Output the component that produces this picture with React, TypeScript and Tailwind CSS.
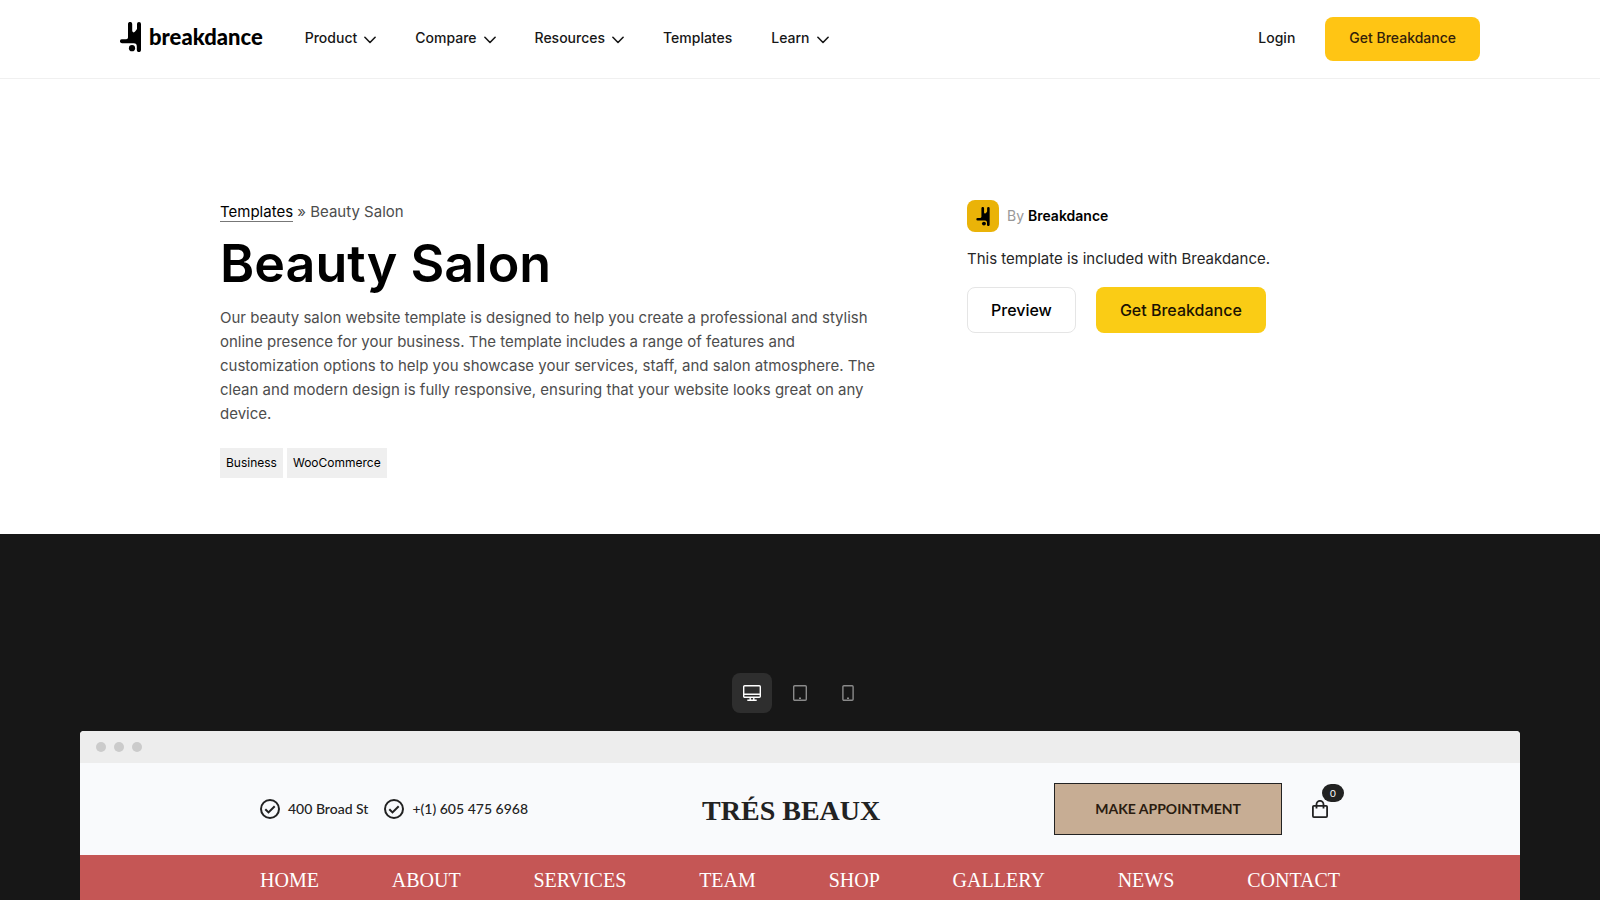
import { useState } from 'react';

const navItems = [
  { label: 'Product', menu: true },
  { label: 'Compare', menu: true },
  { label: 'Resources', menu: true },
  { label: 'Templates', menu: false },
  { label: 'Learn', menu: true },
];

const tags = ['Business', 'WooCommerce'];

const salonLinks = ['HOME', 'ABOUT', 'SERVICES', 'TEAM', 'SHOP', 'GALLERY', 'NEWS', 'CONTACT'];

function DancerIcon({ className }: { className: string }) {
  return (
    <svg viewBox="0 0 21 30" className={className} fill="currentColor" aria-hidden="true">
      <path d="M8 2a2 2 0 0 1 4.200 0v6.600q0 1.800 1.400 1.800t2.300-1.800L17 7V2a2 2 0 0 1 4 0v26a2 2 0 0 1-4.200 0v-3.500q0-3.200-3-3.200H2a2 2 0 0 1 0-4.100h4.200q1.800 0 1.800-1.800z" />
      <circle cx="12" cy="26.200" r="3.100" />
    </svg>
  );
}

function Chevron() {
  return (
    <svg viewBox="0 0 12 8" className="mt-1 h-2 w-3" fill="none" stroke="currentColor" strokeWidth="1.600" strokeLinecap="round" strokeLinejoin="round" aria-hidden="true">
      <path d="M.9 1.300 6 6.500l5.100-5.200" />
    </svg>
  );
}

function CheckCircle() {
  return (
    <svg viewBox="0 0 20 20" className="h-5 w-5" fill="none" stroke="currentColor" strokeWidth="2" aria-hidden="true">
      <circle cx="10" cy="10" r="9" />
      <path d="m5.300 10.200 3.200 3.200 6.200-6.200" />
    </svg>
  );
}

function BagIcon() {
  return (
    <svg viewBox="0 0 16 18" className="h-[18px] w-4" fill="none" stroke="currentColor" strokeWidth="1.800" aria-hidden="true">
      <rect x=".9" y="5.800" width="14.200" height="11.300" rx="1" />
      <path d="M4.500 8.600V4.300a3.500 3.500 0 0 1 7 0v4.300" />
    </svg>
  );
}

function DesktopIcon() {
  return (
    <svg viewBox="0 0 18 16" className="h-4 w-[18px]" fill="none" stroke="currentColor" strokeWidth="1.400" aria-hidden="true">
      <rect x=".7" y=".7" width="16.600" height="11.600" rx="1" />
      <path d="M.7 9.300h16.600M7.200 12.300v3M10.800 12.300v3M4.300 15.300h9.400" />
    </svg>
  );
}

function TabletIcon() {
  return (
    <svg viewBox="0 0 14 16" className="h-4 w-[14px]" fill="none" stroke="currentColor" strokeWidth="1.400" aria-hidden="true">
      <rect x=".7" y=".7" width="12.600" height="14.600" rx="1" />
      <path d="M6 13.200h2" />
    </svg>
  );
}

function PhoneIcon() {
  return (
    <svg viewBox="0 0 12 16" className="h-4 w-3" fill="none" stroke="currentColor" strokeWidth="1.400" aria-hidden="true">
      <rect x=".9" y=".7" width="10.200" height="14.600" rx="1" />
      <path d="M5 13.200h2" />
    </svg>
  );
}

const devices = [
  { id: 'desktop', label: 'Desktop', Icon: DesktopIcon },
  { id: 'tablet', label: 'Tablet', Icon: TabletIcon },
  { id: 'phone', label: 'Phone', Icon: PhoneIcon },
];

function Header() {
  return (
    <header className="border-b border-[#f0f0f0] bg-white">
      <div className="mx-auto flex max-w-[1360px] items-center py-[17px]">
        <a href="#" className="flex items-center gap-2 pb-1 text-black">
          <DancerIcon className="h-[30px] w-[21px]" />
          <span className="font-['Lato',sans-serif] text-[22px] leading-7 font-black">breakdance</span>
        </a>
        <nav className="ml-[42px] flex items-center gap-[39px] pb-0.5 text-sm font-medium text-[#171717]">
          {navItems.map((item) =>
            item.menu ? (
              <button key={item.label} type="button" className="flex items-center gap-[7px]">
                {item.label}
                <Chevron />
              </button>
            ) : (
              <a key={item.label} href="#">{item.label}</a>
            )
          )}
        </nav>
        <div className="ml-auto flex items-baseline gap-[30px] text-sm font-medium">
          <a href="#" className="text-[#171717]">Login</a>
          <a href="#" className="rounded-lg bg-[#ffc514] px-6 pt-[11px] pb-[13px] text-[#33210a]">Get Breakdance</a>
        </div>
      </div>
    </header>
  );
}

function Intro() {
  return (
    <section className="mx-auto grid max-w-[1160px] grid-cols-[667fr_413fr] gap-20 pt-[121px] pb-14">
      <div>
        <p className="text-[15px] leading-6 text-[#4d4d4d]">
          <a href="#" className="border-b border-[#777] text-black">Templates</a> » Beauty Salon
        </p>
        <h1 className="mt-2 text-[52px] leading-[64px] font-semibold text-black">Beauty Salon</h1>
        <p className="mt-[10px] text-[15px] leading-6 text-[#4d4d4d]">
          Our beauty salon website template is designed to help you create a professional and stylish online presence for your business. The template includes a range of features and customization options to help you showcase your services, staff, and salon atmosphere. The clean and modern design is fully responsive, ensuring that your website looks great on any device.
        </p>
        <ul className="mt-[22px] flex gap-1">
          {tags.map((tag) => (
            <li key={tag} className="bg-[#efefef] px-1.5 py-[7px] text-xs text-black">{tag}</li>
          ))}
        </ul>
      </div>

      <div>
        <div className="flex items-center gap-2 text-sm">
          <span className="flex h-8 w-8 items-center justify-center rounded-lg bg-[#eab308] text-black">
            <DancerIcon className="h-[19px] w-[14px]" />
          </span>
          <p className="text-[#999]">
            By <span className="font-semibold text-black">Breakdance</span>
          </p>
        </div>
        <p className="mt-[15px] text-[15px] leading-6 text-[#262626]">This template is included with Breakdance.</p>
        <div className="mt-4 flex gap-5 text-base font-medium">
          <a href="#" className="rounded-lg border border-[#e5e5e5] px-[23px] py-[10px] text-black">Preview</a>
          <a href="#" className="rounded-lg bg-[#facc15] px-6 py-[11px] text-[#1a1203]">Get Breakdance</a>
        </div>
      </div>
    </section>
  );
}

function SalonSite() {
  return (
    <div className="overflow-hidden rounded-t-sm bg-[#f9fafc]">
      <div className="flex h-8 items-center gap-2 bg-[#ededed] px-4">
        <span className="h-[10px] w-[10px] rounded-full bg-[#cbcbcb]" />
        <span className="h-[10px] w-[10px] rounded-full bg-[#cbcbcb]" />
        <span className="h-[10px] w-[10px] rounded-full bg-[#cbcbcb]" />
      </div>

      <div className="mx-auto flex max-w-[1080px] items-center justify-between py-5 font-['Lato',sans-serif] text-[#222]">
        <div className="flex gap-4 text-sm font-medium">
          <span className="flex gap-2"><CheckCircle />400 Broad St</span>
          <span className="flex gap-2"><CheckCircle />+(1) 605 475 6968</span>
        </div>
        <p className="pt-1 font-['Liberation_Serif',serif] text-[28px] leading-8 font-bold">TRÉS BEAUX</p>
        <div className="flex items-center gap-[18px]">
          <button type="button" className="border border-[#222] bg-[#c7ad94] px-10 py-[15px] text-sm font-bold text-[#2a1c10]">MAKE APPOINTMENT</button>
          <button type="button" aria-label="Cart" className="relative px-3">
            <BagIcon />
            <span className="absolute -top-4 left-[22px] rounded-full bg-[#222] px-2 text-[10px] leading-[18px] text-white">0</span>
          </button>
        </div>
      </div>

      <nav className="bg-[#c55655]">
        <div className="mx-auto flex max-w-[1080px] justify-between py-[11px] font-['Liberation_Serif',serif] text-xl text-white">
          {salonLinks.map((link) => (
            <a key={link} href="#">{link}</a>
          ))}
        </div>
      </nav>
    </div>
  );
}

export default function App() {
  const [device, setDevice] = useState('desktop');

  return (
    <div className="h-screen overflow-hidden bg-white font-['Inter',sans-serif]">
      <Header />
      <Intro />
      <section className="bg-[#171717] px-20 pt-[139px]">
        <div className="mb-[18px] flex justify-center gap-2">
          {devices.map(({ id, label, Icon }) => (
            <button
              key={id}
              type="button"
              aria-label={label}
              onClick={() => setDevice(id)}
              className={`flex h-10 w-10 items-center justify-center rounded-lg ${device === id ? 'bg-[#2e2e2e] text-white' : 'text-[#8a8a8a]'}`}
            >
              <Icon />
            </button>
          ))}
        </div>
        <SalonSite />
      </section>
    </div>
  );
}
